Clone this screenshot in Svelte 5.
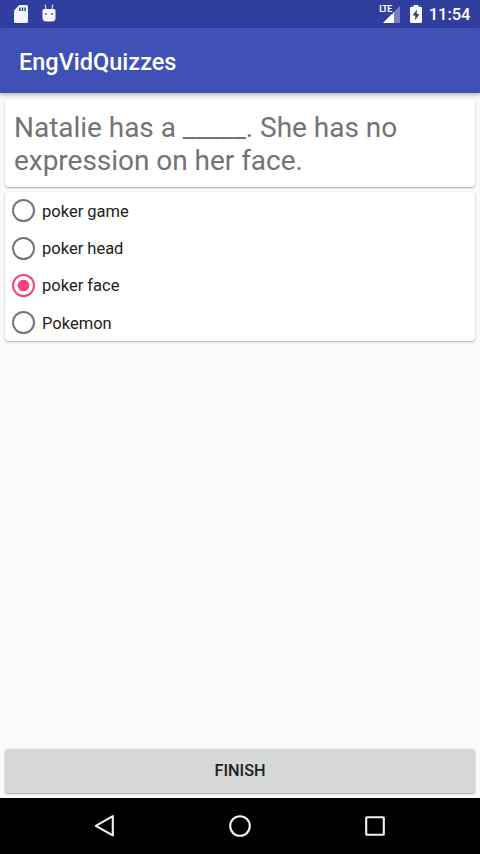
<script>
  const options = ['poker game', 'poker head', 'poker face', 'Pokemon'];
  let selected = $state('poker face');
</script>

<div class="screen">
  <header class="status">
    <svg class="sd" width="14" height="18" viewBox="0 0 14 18" aria-hidden="true">
      <path d="M5.3 0H12.5Q14 0 14 1.5V16.5Q14 18 12.5 18H1.5Q0 18 0 16.5V5.5Z" fill="#f4f6ff" />
      <path d="M5.9 2.5V6M8.5 2.5V6M11.1 2.5V6" stroke="#303f9f" stroke-width="1.5" />
    </svg>
    <svg class="droid" width="14" height="18" viewBox="0 0 14 18" aria-hidden="true">
      <path d="M3.2 .6L4 5M10.8 .6L10 5" stroke="#e6eaff" stroke-width="1.1" />
      <path d="M.5 6.5Q.5 5 2 5H12Q13.5 5 13.5 6.5V13.5Q13.5 17.5 10 17.5H4Q.5 17.5 .5 13.5Z" fill="#f4f6ff" />
      <circle cx="4" cy="10" r="1.1" fill="#756ba5" />
      <circle cx="10" cy="10" r="1.1" fill="#756ba5" />
    </svg>
    <span class="space"></span>
    <span class="signal">
      <svg width="17" height="17" viewBox="0 0 17 17" aria-hidden="true">
        <path d="M17 0V17H0Z" fill="#7781c2" />
        <path d="M11 6V17H0Z" fill="#fff" />
      </svg>
      <span class="lte">LTE</span>
    </span>
    <svg class="battery" width="12" height="18" viewBox="0 0 12 18" aria-hidden="true">
      <path d="M3.5 0H8.5V1.7H10.5Q12 1.7 12 3.2V16.5Q12 18 10.5 18H1.5Q0 18 0 16.5V3.2Q0 1.7 1.5 1.7H3.5Z" fill="#fff" />
      <path d="M6.8 4.5L2.5 10.6H5.2V15.2L9.5 9H6.8Z" fill="#303f9f" />
    </svg>
    <time>11:54</time>
  </header>
  <div class="toolbar"><h1>EngVidQuizzes</h1></div>
  <main>
    <section class="card question">Natalie has a _____. She has no expression on her face.</section>
    <section class="card answers" role="radiogroup">
      {#each options as option}
        <label>
          <input type="radio" name="answer" value={option} bind:group={selected} />
          <span>{option}</span>
        </label>
      {/each}
    </section>
    <button class="finish">FINISH</button>
  </main>
  <nav>
    <svg width="24" height="24" viewBox="0 0 24 24" aria-label="Back">
      <path d="M19.8 2.2V21.4L2.8 11.8Z" fill="none" stroke="#f2f2f2" stroke-width="2.1" stroke-linejoin="round" />
    </svg>
    <svg width="24" height="24" viewBox="0 0 24 24" aria-label="Home">
      <circle cx="12" cy="12" r="9.8" fill="none" stroke="#f2f2f2" stroke-width="2.1" />
    </svg>
    <svg width="24" height="24" viewBox="0 0 24 24" aria-label="Recents">
      <rect x="3.2" y="3.2" width="17.6" height="17.6" rx=".6" fill="none" stroke="#f2f2f2" stroke-width="2.1" />
    </svg>
  </nav>
</div>

<style>
  :global(body) {
    margin: 0;
    background: #fafafa;
  }
  .screen {
    width: 480px;
    height: 854px;
    display: flex;
    flex-direction: column;
    overflow: hidden;
    background: #fafafa;
    font-family: Roboto, sans-serif;
  }
  .status {
    flex: none;
    box-sizing: border-box;
    height: 28px;
    padding: 0 9.5px 0 14px;
    display: flex;
    align-items: center;
    background: #303f9f;
    color: #fff;
  }
  .droid {
    margin: -3px 0 0 14px;
  }
  .space {
    flex: 1;
  }
  .signal {
    position: relative;
    display: flex;
    width: 17px;
  }
  .lte {
    position: absolute;
    left: -4px;
    top: -1px;
    padding-right: 1px;
    background: #303f9f;
    font-size: 8.8px;
    line-height: 9px;
    font-weight: 700;
    letter-spacing: -0.6px;
  }
  .battery {
    margin-left: 9.5px;
  }
  time {
    margin: 2px 0 0 7px;
    font-size: 16.5px;
    font-weight: 500;
    line-height: 20px;
  }
  .toolbar {
    position: relative;
    flex: none;
    box-sizing: border-box;
    height: 65px;
    padding: 2px 19px 0;
    display: flex;
    align-items: center;
    background: #3f51b5;
    box-shadow: 0 2px 4px rgba(0, 0, 0, 0.28);
  }
  h1 {
    margin: 0;
    color: #fff;
    font-size: 23.5px;
    font-weight: 500;
    line-height: 28px;
  }
  main {
    flex: 1;
    display: flex;
    flex-direction: column;
    gap: 5px;
    padding: 6px 5px 5px;
  }
  .card {
    box-sizing: border-box;
    border-radius: 3px;
    background: #fff;
    box-shadow: 0 1px 2px rgba(0, 0, 0, 0.3), 0 0 1px rgba(0, 0, 0, 0.15);
  }
  .question {
    height: 88px;
    padding: 12px 9px 0;
    color: #737373;
    font-size: 28px;
    line-height: 33px;
    letter-spacing: -0.03px;
  }
  .answers {
    height: 149px;
  }
  label {
    display: flex;
    align-items: center;
    height: 37.4px;
    padding-left: 7px;
    color: #212121;
    font-size: 16.5px;
    line-height: 20px;
  }
  label span {
    padding-top: 2px;
  }
  input {
    appearance: none;
    box-sizing: border-box;
    width: 23px;
    height: 23px;
    margin: 0 7px 0 0;
    border: 2.4px solid #757575;
    border-radius: 50%;
  }
  input:checked {
    border-color: #f04483;
    background: radial-gradient(circle, #ff4081 5.4px, transparent 6.2px);
  }
  .finish {
    flex: none;
    height: 44px;
    margin-top: auto;
    padding: 0;
    border: 0;
    border-radius: 2px;
    background: #d6d7d7;
    box-shadow: 0 1px 2px rgba(0, 0, 0, 0.35);
    color: #212121;
    font: 500 16.3px/44px Roboto, sans-serif;
  }
  nav {
    flex: none;
    height: 56px;
    display: flex;
    align-items: center;
    justify-content: center;
    gap: 111px;
    background: #000;
  }
</style>
